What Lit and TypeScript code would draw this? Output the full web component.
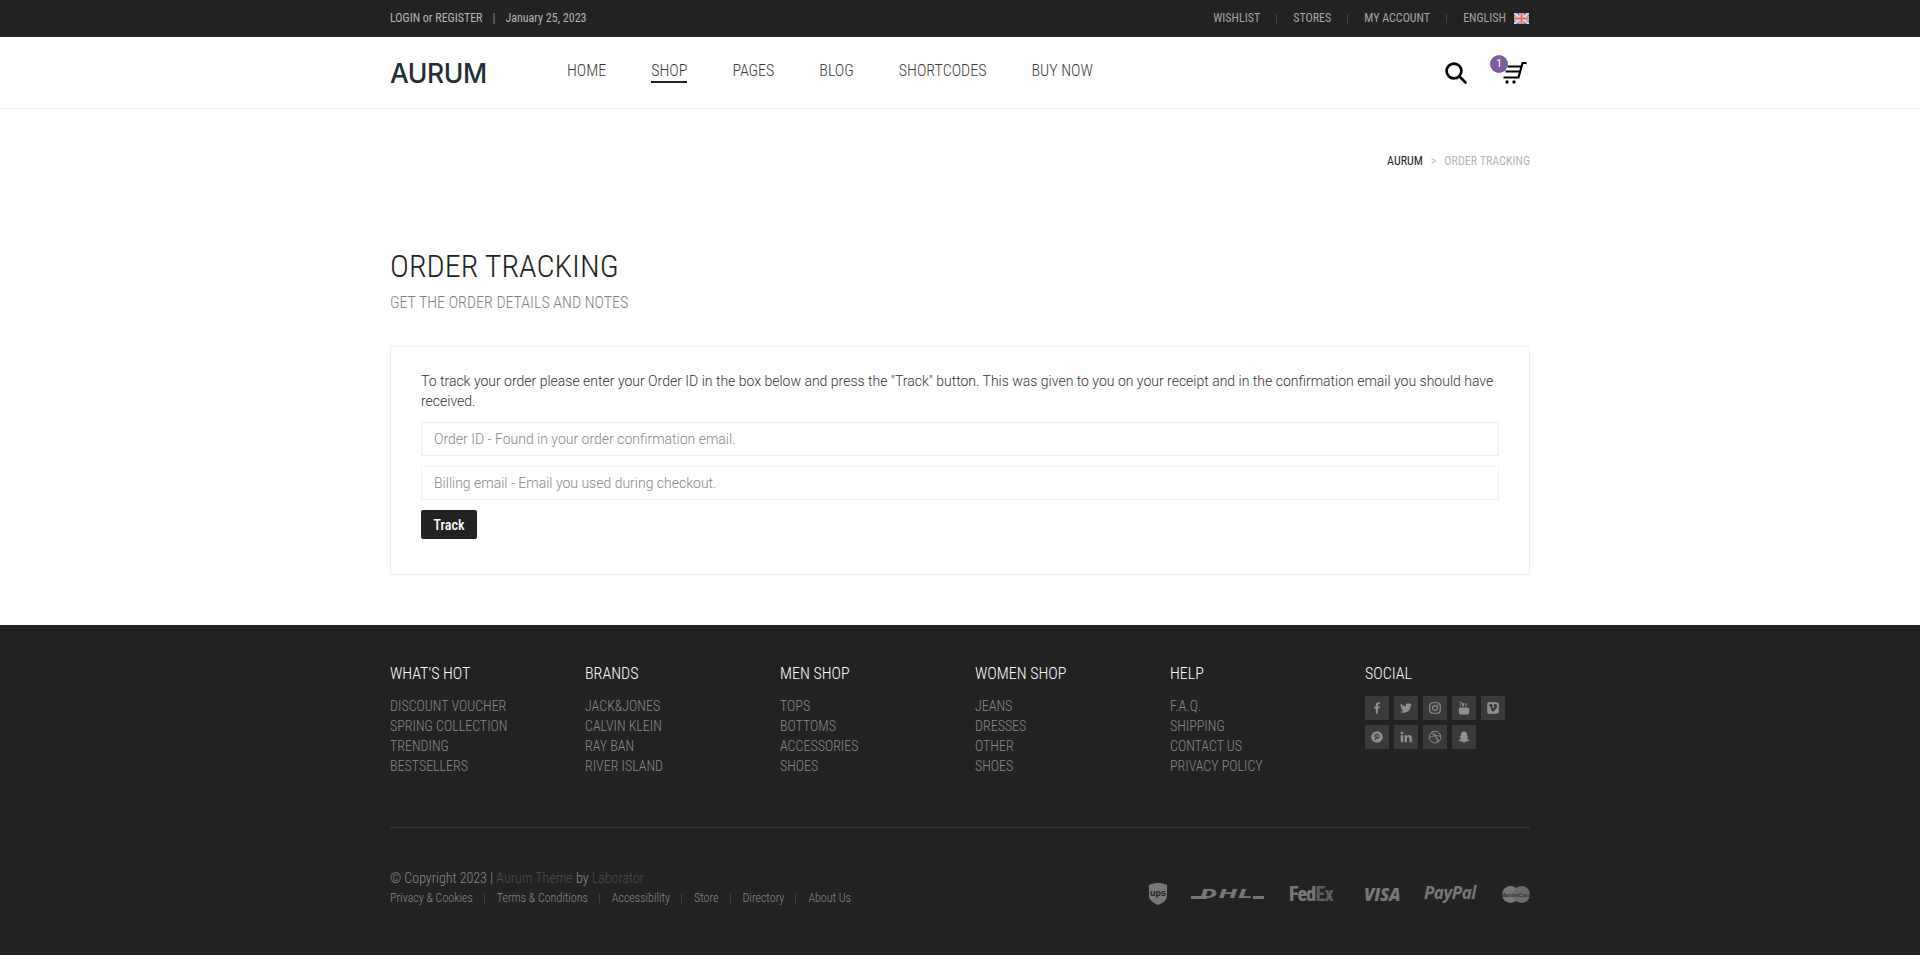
import { LitElement, html, css, svg } from 'lit';
import { customElement } from 'lit/decorators.js';

const footerCols = [
  { title: "WHAT'S HOT", links: ['DISCOUNT VOUCHER', 'SPRING COLLECTION', 'TRENDING', 'BESTSELLERS'] },
  { title: 'BRANDS', links: ['JACK&JONES', 'CALVIN KLEIN', 'RAY BAN', 'RIVER ISLAND'] },
  { title: 'MEN SHOP', links: ['TOPS', 'BOTTOMS', 'ACCESSORIES', 'SHOES'] },
  { title: 'WOMEN SHOP', links: ['JEANS', 'DRESSES', 'OTHER', 'SHOES'] },
  { title: 'HELP', links: ['F.A.Q.', 'SHIPPING', 'CONTACT US', 'PRIVACY POLICY'] },
];

const socialIcons = [
  svg`<path d="M13.500 22v-9h3l.5-3.500h-3.500V7.300c0-1 .3-1.700 1.800-1.700H17V2.400C16.600 2.300 15.600 2.200 14.400 2.200c-2.600 0-4.400 1.600-4.400 4.500v2.800H7V13h3v9z"/>`,
  svg`<path d="M22 5.900c-.7.300-1.500.5-2.400.6.900-.5 1.500-1.300 1.800-2.300-.8.500-1.700.8-2.600 1a4.100 4.100 0 0 0-7 3.700C8.400 8.700 5.400 7.100 3.400 4.600c-1.100 1.900-.5 4.300 1.300 5.500-.7 0-1.300-.2-1.900-.5 0 2 1.400 3.700 3.300 4.100-.6.200-1.200.2-1.900.1.500 1.600 2 2.800 3.800 2.800A8.300 8.300 0 0 1 2 18.300a11.600 11.600 0 0 0 17.900-10.300c.8-.6 1.500-1.300 2.100-2.100z"/>`,
  svg`<rect x="3" y="3" width="18" height="18" rx="5" fill="none" stroke="currentColor" stroke-width="2"/><circle cx="12" cy="12" r="4.200" fill="none" stroke="currentColor" stroke-width="2"/><circle cx="17.200" cy="6.800" r="1.200"/>`,
  svg`<path d="M5 1l1.300 3.500L7.600 1h1.300L7 5.600V9H5.800V5.600L3.800 1zM10.500 3.200c1.100 0 1.700.7 1.700 1.600v2.800c0 1-.6 1.600-1.700 1.600s-1.700-.7-1.700-1.600V4.800c0-1 .6-1.600 1.700-1.600zm3 .1h1.100v4.300c0 .3.200.4.600.1V3.300h1.100v5.600h-1.100v-.5c-.9.900-1.700.7-1.700-.5z"/><rect x="3" y="11" width="18" height="12" rx="3"/>`,
  svg`<path fill-rule="evenodd" d="M5 2h14a3 3 0 0 1 3 3v14a3 3 0 0 1-3 3H5a3 3 0 0 1-3-3V5a3 3 0 0 1 3-3zm13.800 6.500c.2-2.300-.9-3.400-2.700-3.400-1.700.1-3 1.300-3.700 3.500 1.300-.5 2.100-.2 1.800 1.100-.3 1-1.400 2.900-2 2.900-.7 0-1.100-3-1.500-5-.3-1.600-1.200-2.500-2.400-2.300-1.200.2-2.700 1.600-3.800 2.700l.6.900c.5-.4 1.100-.8 1.400-.8 1.100 0 1.700 5.200 2.800 7.700.6 1.400 1.400 2 2.300 2 1.600 0 3.400-1.500 5.200-4 1.700-2.200 3.800-4.900 2-5.300z"/>`,
  svg`<path fill-rule="evenodd" d="M12 2a10 10 0 1 0 0 20 10 10 0 0 0 0-20zm.6 13.500c-.9 0-1.600-.4-2-.9l-.8 3h-1.700l1.400-6.100c-.5-1.900.5-3.300 1.700-3 1.100.2.800 1.800.3 3.400-.3 1.100 1.500 1.500 2.500.2 1-1.500.7-4.300-1.900-4.300-2.900 0-4 2.800-2.800 4.400l-1.100.8C6 10.600 7.800 6.200 12.100 6.200c3.500 0 4.900 3 3.900 6-.6 2-2 3.300-3.400 3.300z"/>`,
  svg`<rect x="3" y="9" width="4.200" height="12"/><circle cx="5.100" cy="5" r="2.400"/><path d="M9.500 9h4v1.700c.7-1.100 2-2 3.800-2 3.300 0 4.700 2 4.700 5.600V21h-4.200v-6c0-1.800-.6-2.800-2-2.800-1.500 0-2.100 1-2.100 2.800v6H9.500z"/>`,
  svg`<g fill="none" stroke="currentColor" stroke-width="1.500"><circle cx="12" cy="12" r="10"/><path d="M5 4.800c3.500 3.600 8 5.600 16.800 5.500M2.200 13.500c6-4.500 11.800-5.500 16.300 6.500M8 2.800c4.500 4.500 7.500 11.500 8 17.600"/></g>`,
  svg`<path d="M12 2.500c3.200 0 5.200 2.300 5.200 5.300v2.600c.8.500 2 .2 2 1 0 1-1.700 1.200-2.100 1.800.5 2 2.500 3.400 4.100 4 .6.300 0 1.200-2.600 1.500l-.4 1.300c-1-.2-2.300-.3-3.200.1-1 .5-1.600 1.400-3 1.400s-2-.9-3-1.400c-.9-.4-2.200-.3-3.200-.1l-.4-1.300c-2.600-.3-3.200-1.200-2.600-1.500 1.600-.6 3.600-2 4.100-4-.4-.6-2.100-.8-2.100-1.800 0-.8 1.200-.5 2-1V7.800c0-3 2-5.300 5.200-5.300z"/>`,
];

@customElement('app-root')
export class AppRoot extends LitElement {
  static styles = css`
    :host {
      display: block;
      background: #fff;
      font-family: Roboto, "Liberation Sans", sans-serif;
      color: #333;
    }
    a { color: inherit; text-decoration: none; }
    .wrap { width: 1140px; margin: 0 auto; }
    .cond { font-family: "Roboto Condensed", Roboto, sans-serif; font-stretch: 75%; }

    .topbar { background: #222; height: 37px; color: #aaa; font-size: 12px; }
    .topbar .wrap { display: flex; justify-content: space-between; align-items: center; height: 36px; }
    .top-left { display: flex; align-items: center; color: #b5b5b5; }
    .top-left .pipe { margin: 0 10px; color: #9a8a70; }
    .top-right { display: flex; align-items: center; color: #a5a5a5; padding-right: 1px; }
    .top-right .sep { width: 1px; height: 9px; background: #444; margin: 1px 16px 0; }
    .flag { margin-left: 8px; display: block; }

    .header { height: 71px; border-bottom: 1px solid #eee; }
    .header .wrap { display: flex; align-items: center; height: 71px; }
    .logo { width: 177px; font-family: Inter, sans-serif; font-weight: 500; font-size: 26.500px; letter-spacing: -0.400px; color: #222d35; line-height: 1; padding-top: 2px; }
    .nav { display: flex; gap: 45px; font-size: 16px; font-weight: 300; color: #3a3a3a; flex: 1; margin-top: -2px; }
    .nav a { padding-bottom: 1px; border-bottom: 2px solid transparent; }
    .nav a.on { border-bottom-color: #222; }
    .tools { display: flex; align-items: center; position: relative; }
    .cart { margin-left: 36px; display: block; margin-right: 3px; }
    .badge {
      position: absolute; right: 22px; top: -7px; width: 18px; height: 18px; border-radius: 50%;
      background: #7b5a9e; color: #fff; font-size: 11px; text-align: center; line-height: 18px;
    }

    .crumbs { display: flex; justify-content: flex-end; padding-top: 45px; font-size: 12px; line-height: 15px; color: #222; }
    .crumbs .arrow { margin: 0 8px; color: #bbb; }
    .crumbs .cur { color: #b5b5b5; }

    .title { padding-top: 77px; }
    h1 { margin: 0; font-size: 32px; font-weight: 300; line-height: 40px; color: #222; }
    .sub { font-size: 16px; font-weight: 300; line-height: 20px; color: #808080; margin-top: 7px; }

    .card {
      margin-top: 33px; border: 1px solid #eee; padding: 24px 30px 0; height: 229px; box-sizing: border-box;
      font-size: 14px; font-weight: 300; color: #333; line-height: 20px;
    }
    .card p { margin: 0 0 11px; }
    .field {
      display: block; box-sizing: border-box; width: 100%; height: 34px; border: 1px solid #eee; margin-bottom: 10px;
      padding: 0 12px; font: 300 14px Roboto, sans-serif; background: #fff; outline: none;
    }
    .field::placeholder { color: #888; opacity: 1; }
    .btn {
      display: block; width: 56px; height: 29px; border: 0; border-radius: 2px; background: #222; color: #fff;
      font: 500 14px "Roboto Condensed", Roboto, sans-serif; font-stretch: 85%; padding: 0;
    }

    .footer { margin-top: 50px; background: #222; height: 330px; color: #888; }
    .cols { display: grid; grid-template-columns: repeat(6, 195px); padding-top: 38px; width: 1170px; height: 202px; box-sizing: border-box; }
    .col h3 { margin: 0 0 11px; color: #fff; font-size: 16px; font-weight: 300; line-height: 22px; }
    .col a { display: block; font-size: 14px; font-weight: 300; line-height: 20px; color: #8a8a8a; }
    .social { display: grid; grid-template-columns: repeat(5, 24px); gap: 5px; margin-top: 3px; }
    .social span { width: 24px; height: 24px; background: #3a3a3a; color: #8f8f8f; display: flex; align-items: center; justify-content: center; }
    .social svg { width: 14px; height: 14px; fill: currentColor; display: block; }

    .bottom { border-top: 1px solid #3a3a3a; display: flex; justify-content: space-between; padding-top: 40px; }
    .copy { font-size: 14px; font-weight: 300; line-height: 20px; color: #8a8a8a; }
    .copy .dim { color: #4c4c4c; }
    .legal { display: flex; align-items: center; font-size: 12px; font-weight: 300; line-height: 20px; color: #8a8a8a; }
    .legal i { width: 1px; height: 9px; background: #3f3f3f; margin: 0 12px 0 11px; }

    .pay { display: flex; align-items: center; color: #777; height: 24px; margin-top: 14px; font-family: "Liberation Sans", sans-serif; }
    .pay svg { display: block; }
    .pay .fedex { margin-left: 25px; font: 800 20px/1 Roboto, sans-serif; font-stretch: 80%; letter-spacing: -0.800px; width: 46px; }
    .pay .fedex b { font-weight: 800; color: #5c5c5c; }
    .pay .visa { margin-left: 29px; font: italic 800 17px/1 "Open Sans", sans-serif; letter-spacing: -0.300px; width: 37px; }
    .pay .paypal { margin-left: 23px; font: italic 700 17px/1 "Open Sans", sans-serif; letter-spacing: -0.500px; width: 53px; margin-top: -3px; }
    .pay .dhl { margin-left: 24px; display: flex; align-items: center; width: 73px; height: 12px; position: relative; justify-content: center; }
    .pay .dhl span { display: block; font: italic 900 13px/12px Roboto, sans-serif; letter-spacing: 1px; transform: scaleX(2); }
    .pay .dhl::before, .pay .dhl::after { content: ""; position: absolute; top: 8px; height: 3px; width: 16px; background: #777; }
    .pay .dhl::before { left: 0; }
    .pay .dhl::after { right: 0; width: 11px; }
    .pay .mc { margin-left: 25px; }
  `;

  render() {
    const uk = html`<svg class="flag" width="15" height="11" viewBox="0 0 15 11">
      <rect width="15" height="11" fill="#6a82c4"/>
      <path d="M0 0l15 11M15 0L0 11" stroke="#f0d8d8" stroke-width="2"/>
      <path d="M7.500 0v11M0 5.500h15" stroke="#f0d8d8" stroke-width="4"/>
      <path d="M7.500 0v11M0 5.500h15" stroke="#e0705a" stroke-width="2"/>
    </svg>`;
    return html`
      <div class="topbar cond">
        <div class="wrap">
          <div class="top-left"><a>LOGIN</a>&nbsp;or&nbsp;<a>REGISTER</a><span class="pipe">|</span><span>January 25, 2023</span></div>
          <div class="top-right">
            <a>WISHLIST</a><span class="sep"></span><a>STORES</a><span class="sep"></span><a>MY ACCOUNT</a><span class="sep"></span><a>ENGLISH</a>${uk}
          </div>
        </div>
      </div>
      <div class="header">
        <div class="wrap">
          <div class="logo">AURUM</div>
          <nav class="nav cond">
            <a>HOME</a><a class="on">SHOP</a><a>PAGES</a><a>BLOG</a><a>SHORTCODES</a><a>BUY NOW</a>
          </nav>
          <div class="tools">
            <svg width="22" height="22" viewBox="0 0 22 22" fill="none" stroke="#000" stroke-width="2.600">
              <circle cx="9" cy="9" r="7.400"/><path d="M14.500 14.500l6 6" stroke-linecap="round"/>
            </svg>
            <svg class="cart" width="24" height="22" viewBox="0 0 24 22" fill="none" stroke="#000" stroke-width="2.200">
              <path d="M23.500 1h-4L15.500 15.500H0.500M4.500 4.500h13.500M2.500 9.500h14.500"/>
              <circle cx="4" cy="20" r="1.700" fill="#000" stroke="none"/><circle cx="11" cy="20" r="1.700" fill="#000" stroke="none"/>
            </svg>
            <span class="badge">1</span>
          </div>
        </div>
      </div>
      <div class="wrap">
        <div class="crumbs cond"><a>AURUM</a><span class="arrow">&gt;</span><span class="cur">ORDER TRACKING</span></div>
        <div class="title cond">
          <h1>ORDER TRACKING</h1>
          <div class="sub">GET THE ORDER DETAILS AND NOTES</div>
        </div>
        <div class="card">
          <p>To track your order please enter your Order ID in the box below and press the "Track" button. This was given to you on your receipt and in the confirmation email you should have received.</p>
          <input class="field" placeholder="Order ID - Found in your order confirmation email." />
          <input class="field" placeholder="Billing email - Email you used during checkout." />
          <button class="btn">Track</button>
        </div>
      </div>
      <footer class="footer">
        <div class="wrap">
          <div class="cols cond">
            ${footerCols.map((c) => html`<div class="col"><h3>${c.title}</h3>${c.links.map((l) => html`<a>${l}</a>`)}</div>`)}
            <div class="col">
              <h3>SOCIAL</h3>
              <div class="social">${socialIcons.map((i) => html`<span><svg viewBox="0 0 24 24">${i}</svg></span>`)}</div>
            </div>
          </div>
          <div class="bottom">
            <div class="cond">
              <div class="copy">© Copyright 2023 | <span class="dim">Aurum Theme</span> by <span class="dim">Laborator</span></div>
              <div class="legal"><a>Privacy &amp; Cookies</a><i></i><a>Terms &amp; Conditions</a><i></i><a>Accessibility</a><i></i><a>Store</a><i></i><a>Directory</a><i></i><a>About Us</a></div>
            </div>
            <div class="pay">
              <svg width="18" height="22" viewBox="0 0 18 22">
                <path d="M9 0c3 0 6 .6 9 2v11c0 4-4 7-9 9-5-2-9-5-9-9V2c3-1.400 6-2 9-2z" fill="#777"/>
                <text x="9" y="13" text-anchor="middle" font-family="Liberation Sans" font-weight="700" font-size="9" fill="#222">ups</text>
              </svg>
              <div class="dhl"><span>DHL</span></div>
              <div class="fedex">Fed<b>Ex</b></div>
              <div class="visa">VISA</div>
              <div class="paypal">PayPal</div>
              <svg class="mc" width="28" height="17" viewBox="0 0 28 17">
                <circle cx="8.500" cy="8.500" r="8.500" fill="#777"/><circle cx="19.500" cy="8.500" r="8.500" fill="#6a6a6a"/>
                <text x="14" y="10.500" text-anchor="middle" font-family="Liberation Sans" font-weight="700" font-size="5.500" fill="#333">MasterCard</text>
              </svg>
            </div>
          </div>
        </div>
      </footer>
    `;
  }
}
